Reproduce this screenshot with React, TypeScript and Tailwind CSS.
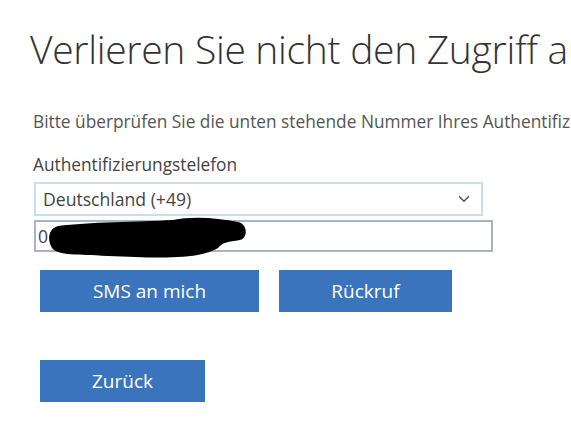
import { ChevronDown } from "lucide-react";

export default function App() {
  return (
    <div className="w-[571px] h-[436px] overflow-hidden bg-white font-['Open_Sans',sans-serif] text-[#333]">
      <div className="pl-[30px] pt-[24px]">
        {/* Title */}
        <h1 className="whitespace-nowrap text-[39px] font-light leading-[50px] text-[#333] tracking-[-0.3px]">
          Verlieren Sie nicht den Zugriff auf Ihr Konto!
        </h1>

        <p className="mt-[38px] pl-[3px] whitespace-nowrap text-[17.3px] leading-5 text-[#555]">
          Bitte überprüfen Sie die unten stehende Nummer Ihres Authentifizierungstelefons.
        </p>

        {/* Phone */}
        <div className="mt-[23px] pl-[3px]">
          <label className="block text-[17.3px] leading-5 text-[#444]">Authentifizierungstelefon</label>
          <div className="mt-[7px] flex h-[34px] w-[449px] items-center justify-between border-2 border-[#c9def0] bg-white pl-[7px] pr-[8px] ml-[1px]">
            <span className="text-[17.6px] text-[#444]">Deutschland (+49)</span>
            <ChevronDown className="h-[18px] w-[18px] text-[#555]" strokeWidth={2} />
          </div>
          <div className="relative mt-[4px] ml-[1px] flex h-[32px] w-[459px] items-center border-2 border-[#a7b6c2] bg-white pl-[2px]">
            <span className="text-[17.6px] text-[#444]">0</span>
            {/* redaction */}
            <svg className="absolute left-[12px] top-[-6px]" width="200" height="44" viewBox="0 0 200 44">
              <path
                d="M10 10 C 40 6, 90 6, 125 4 C 145 0, 170 2, 190 6 C 200 8, 200 22, 192 24 C 180 26, 175 26, 170 32 C 150 44, 110 42, 60 40 C 30 38, 10 40, 4 32 C -2 22, 2 12, 10 10 Z"
                fill="#000"
              />
            </svg>
          </div>
        </div>

        {/* Actions */}
        <div className="mt-[18px] flex gap-[20px] pl-[10px]">
          <button className="h-[42px] w-[219px] bg-[#3a74bc] text-[19px] text-white">SMS an mich</button>
          <button className="h-[42px] w-[173px] bg-[#3a74bc] text-[19px] text-white">Rückruf</button>
        </div>
        <div className="mt-[48px] pl-[10px]">
          <button className="h-[42px] w-[165px] bg-[#3a74bc] text-[19px] text-white">Zurück</button>
        </div>
      </div>
    </div>
  );
}
